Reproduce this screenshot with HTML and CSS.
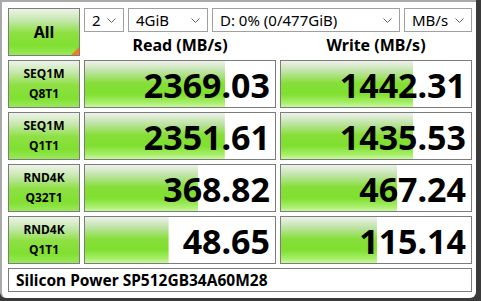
FILE: index.html
```html
<!DOCTYPE html>
<html lang="en">
<head>
    <meta charset="UTF-8">
    <title>CrystalDiskMark</title>
    <link rel="stylesheet" href="styles.css">
</head>
<body>
    <div class="window">
        <div class="grid">
            <div class="all">All<span class="corner"></span></div>

            <div class="top">
                <div class="selects">
                    <div class="combo w-count"><span>2</span><svg class="chev" viewBox="0 0 9 5"><polyline points="0.5,0.5 4.5,4.5 8.5,0.5"/></svg></div>
                    <div class="combo w-size"><span>4GiB</span><svg class="chev" viewBox="0 0 9 5"><polyline points="0.5,0.5 4.5,4.5 8.5,0.5"/></svg></div>
                    <div class="combo w-drive"><span>D: 0% (0/477GiB)</span><svg class="chev" viewBox="0 0 9 5"><polyline points="0.5,0.5 4.5,4.5 8.5,0.5"/></svg></div>
                    <div class="combo w-unit"><span>MB/s</span><svg class="chev" viewBox="0 0 9 5"><polyline points="0.5,0.5 4.5,4.5 8.5,0.5"/></svg></div>
                </div>
                <div class="heads">
                    <div>Read (MB/s)</div>
                    <div>Write (MB/s)</div>
                </div>
            </div>

            <!-- filas de resultados -->
            <div class="label">SEQ1M<br>Q8T1</div>
            <div class="value" style="--fill: 73.7%">2369.03</div>
            <div class="value" style="--fill: 69.6%">1442.31</div>

            <div class="label">SEQ1M<br>Q1T1</div>
            <div class="value" style="--fill: 73.6%">2351.61</div>
            <div class="value" style="--fill: 69.5%">1435.53</div>

            <div class="label">RND4K<br>Q32T1</div>
            <div class="value" style="--fill: 59.5%">368.82</div>
            <div class="value" style="--fill: 61.3%">467.24</div>

            <div class="label">RND4K<br>Q1T1</div>
            <div class="value" style="--fill: 44%">48.65</div>
            <div class="value" style="--fill: 50.5%">115.14</div>

            <div class="name">Silicon Power SP512GB34A60M28</div>
        </div>
    </div>
</body>
</html>
```

FILE: styles.css
```css
body {
    margin: 0;
    width: 481px;
    height: 301px;
    overflow: hidden;
    background-color: #3a3a3a;
    font-family: "Noto Sans", "DejaVu Sans", sans-serif;
    color: #000;
}

.window {
    box-sizing: border-box;
    width: 476px;
    height: 298px;
    background-color: #fff;
    border-left: 2px solid #a9a9a9;
    border-top: 2px solid #a9a9a9;
    border-radius: 0 0 6px 6px;
    padding: 6px 0 0 6px;
}

.grid {
    display: grid;
    grid-template-columns: 72px 192px 192px;
    grid-template-rows: repeat(5, 48px) 24px;
    gap: 4px;
}

/* degradado verde de CrystalDiskMark */
.all,
.label {
    box-sizing: border-box;
    border: 1px solid #7c7c7c;
    background: linear-gradient(to bottom, #eef3ea 0%, #c4e8ab 25%, #8ee043 52%, #80e030 80%, #9ae85c 100%);
    display: flex;
    align-items: center;
    justify-content: center;
    text-align: center;
    font-weight: 700;
}

.all {
    position: relative;
    font-size: 16px;
}

.all .corner {
    position: absolute;
    right: 0;
    bottom: 0;
    width: 0;
    height: 0;
    border-left: 8px solid transparent;
    border-bottom: 8px solid #f07d1e;
}

.label {
    font-size: 12px;
    line-height: 20px;
}

.top {
    grid-column: 2 / 4;
    display: flex;
    flex-direction: column;
}

.selects {
    display: flex;
    gap: 4px;
    height: 24px;
}

.combo {
    box-sizing: border-box;
    border: 1px solid #a0a0a0;
    background-color: #fff;
    display: flex;
    align-items: center;
    justify-content: space-between;
    padding: 0 7px 0 7px;
    font-size: 15px;
}

.chev {
    width: 9px;
    height: 5px;
    fill: none;
    stroke: #606060;
    stroke-width: 1;
}

.w-count { width: 40px; }
.w-size { width: 80px; }
.w-drive { width: 188px; }
.w-unit { width: 68px; }

.heads {
    display: grid;
    grid-template-columns: 192px 192px;
    gap: 4px;
    flex: 1;
    align-items: center;
    font-size: 16px;
    font-weight: 700;
    text-align: center;
    padding-top: 2px;
}

.value {
    box-sizing: border-box;
    border: 1px solid #7c7c7c;
    background-color: #fff;
    background-image: linear-gradient(to bottom, #eef1ec 0%, #c0e4a8 22%, #86de38 48%, #80e030 72%, #a6ee68 90%, #c8f8a0 100%);
    background-repeat: no-repeat;
    background-size: var(--fill) 100%;
    display: flex;
    align-items: center;
    justify-content: flex-end;
    padding: 2px 5px 0 0;
    font-size: 34px;
    font-weight: 700;
    line-height: 1;
}

.name {
    grid-column: 1 / 4;
    box-sizing: border-box;
    border: 1px solid #7c7c7c;
    display: flex;
    align-items: center;
    padding-left: 7px;
    font-size: 15.5px;
    font-weight: 700;
}
```
